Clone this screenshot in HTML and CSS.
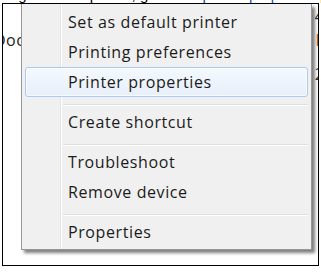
FILE: index.html
```html
<!DOCTYPE html>
<html lang="en">
<head>
    <meta charset="UTF-8">
    <meta name="viewport" content="width=device-width, initial-scale=1.0">
    <title>Printer context menu</title>
    <link rel="stylesheet" href="styles.css">
</head>
<body>
    <div class="caption">
        <p>Right-click a printer, go to the <span class="link">printer properties</span> page, pick up a printer</p>
    </div>

    <div class="shot">
        <div class="backdrop">
            <div class="line line-top"><span></span><span class="tail">4</span></div>
            <div class="line"><span class="head">Doc</span><span class="tail brown">k</span></div>
            <div class="line line-low"><span></span><span class="tail">2</span></div>
        </div>

        <ul class="menu">
            <li class="item">Set as default printer</li>
            <li class="item">Printing preferences</li>
            <li class="item hover">Printer properties</li>
            <li class="sep"></li>
            <li class="item">Create shortcut</li>
            <li class="sep"></li>
            <li class="item">Troubleshoot</li>
            <li class="item">Remove device</li>
            <li class="sep"></li>
            <li class="item">Properties</li>
        </ul>
    </div>
</body>
</html>
```

FILE: styles.css
```css
body {
    margin: 0;
    padding: 0;
    background-color: #fff;
    font-family: "Liberation Sans", Arial, sans-serif;
    color: #000;
}
.caption {
    height: 3px;
    overflow: hidden;
}
.caption p {
    margin: -13px 0 0 4px;
    font-size: 15px;
    line-height: 16px;
    white-space: nowrap;
}
.link {
    color: #1a4fa8;
}
.shot {
    position: relative;
    margin-left: 2px;
    width: 315px;
    height: 261px;
    border: 1px solid #000;
    overflow: hidden;
    background-color: #fff;
}
.backdrop {
    font-family: "Open Sans", "Noto Sans", sans-serif;
    font-size: 16px;
    color: #222;
}
.line {
    display: flex;
    justify-content: space-between;
    height: 20px;
    line-height: 20px;
}
.line-top {
    height: 24px;
    margin-top: 2px;
}
.line-low {
    margin-top: 14px;
}
.head {
    margin-left: -9px;
    letter-spacing: 0.5px;
}
.tail {
    margin-right: -6px;
    color: #333;
}
.brown {
    color: #b5651d;
}
.menu {
    position: absolute;
    top: 0;
    left: 18px;
    width: 283px;
    margin: 0;
    padding: 3px 3px 2px 3px;
    list-style: none;
    background-color: #f0f0f0;
    border: 1px solid #979797;
    border-top: none;
    box-shadow: 3px 3px 3px rgba(0, 0, 0, 0.5);
    font-family: "Open Sans", "Noto Sans", sans-serif;
    font-size: 16px;
    letter-spacing: 0.6px;
    color: #1b1b1b;
}
.menu::before {
    content: "";
    position: absolute;
    top: 0;
    bottom: 0;
    left: 38px;
    width: 1px;
    background-color: #e2e3e3;
    border-right: 1px solid #fff;
}
.item {
    position: relative;
    height: 30px;
    line-height: 31px;
    padding-left: 43px;
    box-sizing: border-box;
}
.item.hover {
    border: 1px solid #a9caf2;
    border-radius: 3px;
    padding-left: 42px;
    line-height: 29px;
    background: linear-gradient(#f5f9fe, #e7effb);
    box-shadow: inset 0 0 0 1px rgba(255, 255, 255, 0.7);
}
.sep {
    position: relative;
    height: 10px;
    margin-left: 38px;
    box-sizing: border-box;
    padding-top: 7px;
}
.sep::after {
    content: "";
    display: block;
    height: 1px;
    background-color: #e0e0e0;
    border-bottom: 1px solid #fff;
}
```
